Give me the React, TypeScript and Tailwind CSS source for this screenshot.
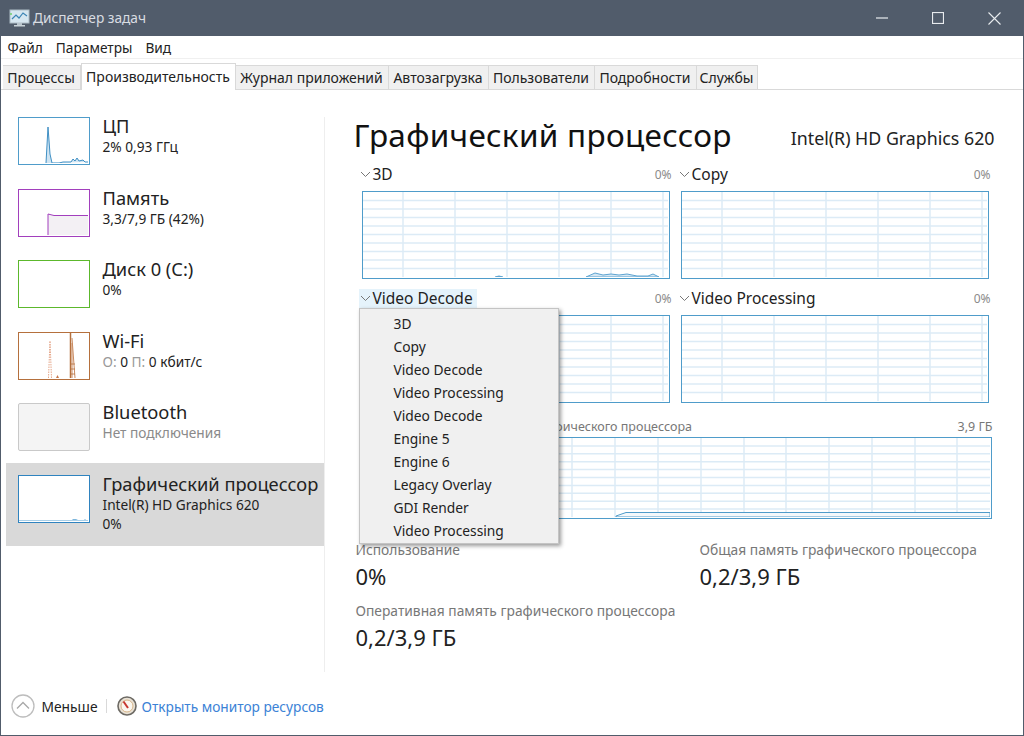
import React from 'react';

const tabs = [
  { label: 'Процессы', width: 'w-[78px]' },
  { label: 'Производительность', width: 'w-[155px]', active: true },
  { label: 'Журнал приложений', width: 'w-[153px]' },
  { label: 'Автозагрузка', width: 'w-[100px]' },
  { label: 'Пользователи', width: 'w-[106px]' },
  { label: 'Подробности', width: 'w-[102px]' },
  { label: 'Службы', width: 'w-[61px]' },
];

const engines = [
  '3D',
  'Copy',
  'Video Decode',
  'Video Processing',
  'Video Decode',
  'Engine 5',
  'Engine 6',
  'Legacy Overlay',
  'GDI Render',
  'Video Processing',
];

const Grid: React.FC<{ xs: number[]; rows: number; w: number; h: number; children?: React.ReactNode }> = ({
  xs,
  rows,
  w,
  h,
  children,
}) => (
  <svg width={w} height={h} className="block">
    {Array.from({ length: rows }).map((_, i) => (
      <line
        key={i}
        x1={0}
        x2={w}
        y1={((i + 1) * h) / (rows + 1)}
        y2={((i + 1) * h) / (rows + 1)}
        stroke="#dcebf6"
        strokeWidth={1.5}
      />
    ))}
    {xs.map((x) => (
      <line key={x} x1={x} x2={x} y1={0} y2={h} stroke="#dcebf6" strokeWidth={1.5} />
    ))}
    {children}
  </svg>
);

const EngineGraph: React.FC<{ label: string; highlight?: boolean; children?: React.ReactNode }> = ({
  label,
  highlight,
  children,
}) => (
  <div className="w-[318px]">
    <div className="-mt-px flex h-[25px] items-center justify-between pr-px">
      <div className={`ml-[4px] flex h-[20px] items-center pl-px pr-[4px] ${highlight ? 'bg-[#e5f3fb]' : ''}`}>
        <svg width="11" height="7" viewBox="0 0 11 7" className="mr-[2px]">
          <path d="M1 1l4.5 4.5L10 1" fill="none" stroke="#777" strokeWidth="1" />
        </svg>
        <span className="text-[15.5px] text-[#222]">{label}</span>
      </div>
      <span className="text-[12px] text-[#8a8a8a]">0%</span>
    </div>
    <div className="ml-[7px] mt-[4px] h-[88px] w-[308px] border-[1.5px] border-[#4f9cca]">
      <Grid xs={[40, 92, 144, 196, 248, 300]} rows={9} w={305} h={85}>
        {children}
      </Grid>
    </div>
  </div>
);

const Thumb: React.FC<{ border: string; fill?: string; children?: React.ReactNode }> = ({
  border,
  fill = 'bg-white',
  children,
}) => (
  <div className={`h-[48px] w-[72px] shrink-0 border-[1.5px] ${border} ${fill}`}>
    <svg width="69" height="45" className="block">
      {children}
    </svg>
  </div>
);

const SideItem: React.FC<{ title: string; active?: boolean; thumb: React.ReactNode; children: React.ReactNode }> = ({
  title,
  active,
  thumb,
  children,
}) => (
  <div className={`flex pl-[12px] pt-[12px] ${active ? 'h-[83px] bg-[#d9d9d9]' : 'h-[71.6px]'}`}>
    {thumb}
    <div className="ml-[13px] -mt-[4px]">
      <div className="whitespace-nowrap text-[18.3px] leading-[25px] text-[#222]">{title}</div>
      {children}
    </div>
  </div>
);

const Stat: React.FC<{ label: string; value: string }> = ({ label, value }) => (
  <div>
    <div className="text-[13.8px] leading-[18px] text-[#777]">{label}</div>
    <div className="mt-[3px] text-[22px] leading-[28px] text-[#222]">{value}</div>
  </div>
);

export default function App() {
  return (
    <div
      className="flex h-[736px] w-[1024px] flex-col overflow-hidden border-x-[1.5px] border-b-[1.5px] border-[#515c6b] bg-white text-[14px] text-[#222]"
      style={{ fontFamily: '"Noto Sans", sans-serif' }}
    >
      <div className="flex h-[36px] shrink-0 items-center bg-[#515c6b] pl-[8px]">
        <svg width="22" height="20" viewBox="0 0 22 20">
          <rect x="1" y="2" width="19" height="13" fill="#d6e6f0" stroke="#aebcc6" />
          <path d="M3 11l4-4 3 3 4-5 4 3" fill="none" stroke="#3d85b5" strokeWidth="1.2" />
          <path d="M1 6h2" stroke="#6fcf6f" strokeWidth="1.5" />
          <rect x="8" y="15" width="5" height="2" fill="#b8c4cc" />
          <rect x="5" y="17" width="11" height="1.5" fill="#c8d2d8" />
        </svg>
        <span className="ml-[2px] text-[13.7px] text-[#d9dde2]">Диспетчер задач</span>
        <div className="ml-auto flex items-center">
          <svg width="12" height="12" className="mr-[44px]">
            <path d="M0 6h12" stroke="#e8ebee" strokeWidth="1.2" />
          </svg>
          <svg width="12" height="12" className="mr-[44px]">
            <rect x="0.5" y="0.5" width="11" height="11" fill="none" stroke="#e8ebee" strokeWidth="1.2" />
          </svg>
          <svg width="13" height="13" className="mr-[22px]">
            <path d="M0.5 0.5l12 12M12.5 0.5l-12 12" stroke="#e8ebee" strokeWidth="1.1" />
          </svg>
        </div>
      </div>

      <div className="flex h-[23px] shrink-0 items-center gap-[13px] border-b border-[#f0f0f0] pl-[6.5px] pt-[3px] text-[13.7px]">
        <span>Файл</span>
        <span>Параметры</span>
        <span>Вид</span>
      </div>

      <div className="flex h-[31px] shrink-0 items-end border-b border-[#d9d9d9] pl-[1.5px]">
        {tabs.map((tab) =>
          tab.active ? (
            <div
              key={tab.label}
              className={`${tab.width} -mb-px flex h-[27px] items-start justify-center whitespace-nowrap border-x border-t border-[#d9d9d9] bg-white pt-[2px]`}
            >
              {tab.label}
            </div>
          ) : (
            <div
              key={tab.label}
              className={`${tab.width} flex h-[24px] items-center justify-center whitespace-nowrap border-r border-t border-[#d9d9d9] bg-[#f0f0f0]`}
            >
              {tab.label}
            </div>
          ),
        )}
      </div>

      <div className="flex min-h-0 flex-1">
        <div className="w-[322.5px] shrink-0 pl-[4.5px] pt-[15px]">
          <SideItem
            title="ЦП"
            thumb={
              <Thumb border="border-[#4f9cca]">
                <path
                  d="M27 45L29 9L31 36L33 45H40L44 44H52L54 41L56 43L58 40L60 43L64 42L66 44L69 44"
                  fill="#cfe4f2"
                  stroke="#3f8fc4"
                  strokeWidth="1"
                />
              </Thumb>
            }
          >
            <div className="text-[13.7px] leading-[18px]">2% 0,93 ГГц</div>
          </SideItem>
          <SideItem
            title="Память"
            thumb={
              <Thumb border="border-[#a23fbd]">
                <path d="M29 45V24L35 25.5H69V45Z" fill="#f3f0f4" />
                <path d="M29 45V24L35 25.5H69" fill="none" stroke="#a23fbd" strokeWidth="1" />
              </Thumb>
            }
          >
            <div className="text-[13.7px] leading-[18px]">3,3/7,9 ГБ (42%)</div>
          </SideItem>
          <SideItem title="Диск 0 (C:)" thumb={<Thumb border="border-[#5cb82c]" />}>
            <div className="text-[13.7px] leading-[18px]">0%</div>
          </SideItem>
          <SideItem
            title="Wi-Fi"
            thumb={
              <Thumb border="border-[#b5703d]">
                <path d="M29.5 45L31 8L32.5 45" fill="none" stroke="#e6a78a" strokeWidth="1" strokeDasharray="1.5 1" />
                <path d="M37 45l1.5-3 1.5 3" fill="#c7794e" />
                <path d="M51.5 0V45" stroke="#b5703d" strokeWidth="1.5" />
                <path d="M53 10V45M56 45L53 5" fill="none" stroke="#c98a60" strokeWidth="1" />
                <path d="M51 31h5M51 36h5M51 41h5" stroke="#b5703d" strokeWidth="0.8" />
              </Thumb>
            }
          >
            <div className="text-[13.7px] leading-[18px]">
              <span className="text-[#999]">О:</span> 0 <span className="text-[#999]">П:</span> 0 кбит/с
            </div>
          </SideItem>
          <SideItem
            title="Bluetooth"
            thumb={<div className="h-[48px] w-[72px] shrink-0 rounded-[2px] border-[1.5px] border-[#c9c9c9] bg-[#f4f4f4]" />}
          >
            <div className="text-[13.7px] leading-[18px] text-[#8a8a8a]">Нет подключения</div>
          </SideItem>
          <SideItem
            title="Графический процессор"
            active
            thumb={
              <Thumb border="border-[#2f83bf]">
                <path d="M52 45L54 43H57L59 44H62L64 45Z" fill="#7db6dc" />
                <path d="M64 45l2-2 2 2Z" fill="#7db6dc" />
                <path d="M0 44.5H69" stroke="#a9cfe8" strokeWidth="1" />
              </Thumb>
            }
          >
            <div className="text-[13.7px] leading-[18px]">Intel(R) HD Graphics 620</div>
            <div className="text-[13.7px] leading-[19px]">0%</div>
          </SideItem>
        </div>

        <div className="flex min-w-0 flex-1 flex-col">
          <div className="mt-[27px] h-[555px] border-l-[1.5px] border-[#eeeeee] pl-[29px]">
            <div className="relative w-[641px]">
              <div className="flex h-[44px] items-center justify-between">
                <span className="mb-[9px] text-[31.5px] leading-[36px] tracking-[0.3px] text-[#111]">
                  Графический процессор
                </span>
                <span className="mb-[1px] text-[17.8px] text-[#222]">Intel(R) HD Graphics 620</span>
              </div>

              <div className="ml-[1px] mt-[2px] flex w-[640px] gap-[1px]">
                <EngineGraph label="3D">
                  <path d="M132 85q4-2 8 0" fill="#5ea4d1" stroke="#5ea4d1" />
                  <path
                    d="M223 85L232 81L240 83L248 82L256 83L264 82L274 84L285 84L290 82L296 85Z"
                    fill="#d4e7f4"
                    stroke="#5ea4d1"
                  />
                </EngineGraph>
                <EngineGraph label="Copy" />
              </div>

              <div className="ml-[1px] mt-[8px] flex w-[640px] gap-[1px]">
                <EngineGraph label="Video Decode" highlight />
                <EngineGraph label="Video Processing" />
              </div>

              <div className="ml-[8px] mt-[14px] flex w-[631px] justify-between pl-[26px] text-[12.5px] leading-[20px] text-[#777]">
                <span>Использование памяти графического процессора</span>
                <span>3,9 ГБ</span>
              </div>
              <div className="ml-[8px] h-[82px] w-[630px] border-[1.5px] border-[#4f9cca]">
                <Grid xs={[209, 252, 295, 338, 381, 423, 466, 509, 552, 594]} rows={9} w={627} h={79}>
                  <path d="M253 78L263 74.5H627V79H253Z" fill="#f4f8fb" stroke="#4f9cca" strokeWidth="1" />
                </Grid>
              </div>

              <div className="ml-[2px] mt-[22px] grid grid-cols-[344px_1fr]">
                <Stat label="Использование" value="0%" />
                <Stat label="Общая память графического процессора" value="0,2/3,9 ГБ" />
              </div>
              <div className="ml-[2px] mt-[12px]">
                <Stat label="Оперативная память графического процессора" value="0,2/3,9 ГБ" />
              </div>

              <div className="absolute left-[5px] top-[191px] h-[236px] w-[200px] border border-[#c4c4c4] bg-[#f0f0f0] py-[3px] pl-[34px] shadow-[2px_2px_4px_rgba(0,0,0,0.4)]">
                {engines.map((engine, i) => (
                  <div key={i} className="h-[23px] text-[13.8px] leading-[23px] text-[#222]">
                    {engine}
                  </div>
                ))}
              </div>
            </div>
          </div>
        </div>
      </div>

      <div className="flex h-[46px] shrink-0 items-center pb-[13px] pl-[9.5px]">
        <svg width="24" height="24" viewBox="0 0 24 24">
          <circle cx="12" cy="12" r="11" fill="none" stroke="#bdbdbd" strokeWidth="1.3" />
          <path d="M6 14.5l6-6 6 6" fill="none" stroke="#a8a8a8" strokeWidth="1.3" />
        </svg>
        <span className="ml-[7px] mt-[3px] text-[13.8px] text-[#222]">Меньше</span>
        <div className="ml-[8px] h-[14px] w-px bg-[#d9d9d9]" />
        <svg width="20" height="20" viewBox="0 0 20 20" className="ml-[10px]">
          <circle cx="10" cy="10" r="9" fill="#e9e2d6" stroke="#6d6a64" strokeWidth="1.6" />
          <circle cx="10" cy="10" r="6" fill="#fbf7ef" stroke="#d7b58a" strokeWidth="1" />
          <path d="M6.5 5.5L11 12" stroke="#c7372f" strokeWidth="2" />
        </svg>
        <span className="ml-[5px] mt-[3px] text-[13.7px] text-[#3b82d6]">Открыть монитор ресурсов</span>
      </div>
    </div>
  );
}
